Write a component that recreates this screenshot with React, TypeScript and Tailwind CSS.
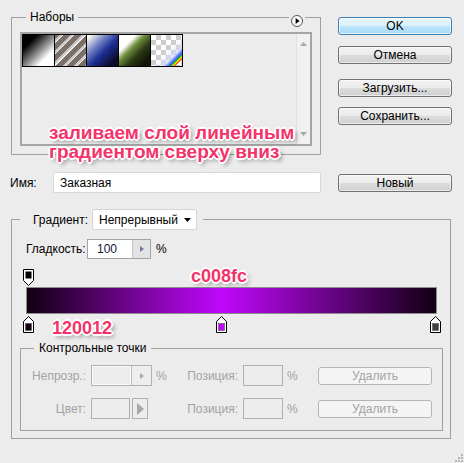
import React from "react";

// presets shown in the "Наборы" list
const presets = [
  "bg-[linear-gradient(135deg,#000_22%,#8a8a8a_52%,#fff_74%)]",
  "bg-[repeating-linear-gradient(135deg,#7b6f67_0px,#7b6f67_3px,#c8c8c8_3px,#c8c8c8_5px,#efefef_5px,#efefef_6px,#7b6f67_6px,#7b6f67_8px)]",
  "bg-[linear-gradient(135deg,#fbf6ee_6%,#7283c4_32%,#1c2f93_55%,#0a0e2c_85%)]",
  "bg-[linear-gradient(135deg,#fff_27%,#6e8f3c_42%,#2c3a14_62%,#11160a_85%)]",
];

const pinkText =
  "absolute whitespace-nowrap font-bold text-[#f4336b] [text-shadow:-1px_-1px_0_#fff,1px_-1px_0_#fff,-1px_1px_0_#fff,1px_1px_0_#fff,0_-2px_0_#fff,0_2px_0_#fff,-2px_0_0_#fff,2px_0_0_#fff,3px_3px_4px_rgba(0,0,0,0.45)]";

function Btn({
  children,
  kind = "normal",
}: {
  children: React.ReactNode;
  kind?: "normal" | "primary" | "disabled";
}) {
  const look =
    kind === "primary"
      ? "border-[#3c7fb1] bg-[linear-gradient(#eaf6fd,#d9f0fc_50%,#bee6fd_50%,#a7d9f5)] shadow-[inset_0_0_0_1px_rgba(255,255,255,0.7)]"
      : kind === "disabled"
        ? "border-[#b5b5b5] bg-[#f4f4f4] text-[#a3a3a3]"
        : "border-[#707070] bg-[linear-gradient(#f2f2f2,#ebebeb_50%,#dddddd_50%,#cfcfcf)] shadow-[inset_0_0_0_1px_rgba(255,255,255,0.6)]";
  return (
    <div
      className={`flex h-[18px] w-[114px] items-center justify-center rounded-[3px] border text-[12px] leading-none ${look}`}
    >
      {children}
    </div>
  );
}

function TopStop() {
  return (
    <svg width="11" height="17" viewBox="0 0 11 17">
      <path d="M0.5 0.5 H10.5 V11.5 L5.5 16.5 L0.5 11.5 Z" fill="#fff" stroke="#000" />
      <rect x="2.5" y="2.5" width="6" height="7" fill="#000" />
    </svg>
  );
}

function BottomStop({ color }: { color: string }) {
  return (
    <svg width="11" height="17" viewBox="0 0 11 17">
      <path d="M5.5 0.5 L10.5 5.5 V16.5 H0.5 V5.5 Z" fill="#fff" stroke="#000" />
      <rect x="2.5" y="7.5" width="6" height="7" fill={color} stroke="#555" strokeWidth="0.6" />
    </svg>
  );
}

function SpinArrow({ color }: { color: string }) {
  return (
    <svg width="4" height="6" viewBox="0 0 4 6">
      <path d="M0 0 L4 3 L0 6 Z" fill={color} />
    </svg>
  );
}

export default function App() {
  return (
    <div className="relative h-[463px] w-[464px] overflow-hidden bg-[#ececec] font-['Liberation_Sans',Arial,sans-serif] text-[12px] leading-[14px] text-black">
      {/* presets + buttons */}
      <div className="flex">
        <div className="relative ml-[11px] mt-[10px]">
          <fieldset className="w-[310px] border border-[#a0a0a0] px-[8px] pb-[8px]">
            <legend className="ml-[6px] px-[4px] leading-[14px]">Наборы</legend>
            <div className="mt-[8px] flex h-[114px] border-2 border-[#a5a5a5]">
              <div className="flex-1">
                <div className="flex h-[33px] w-[161px] border-y border-l border-black">
                  {presets.map((p) => (
                    <div key={p} className={`h-full w-[32px] border-r border-black ${p}`} />
                  ))}
                  <div className="h-full w-[32px] border-r border-black bg-[conic-gradient(#cdcdcd_25%,#fff_0_50%,#cdcdcd_0_75%,#fff_0)] bg-[length:10px_10px]">
                    <div className="h-full w-full bg-[linear-gradient(135deg,transparent_50%,rgba(215,222,255,0.7)_70%,#3a5cff_79%,#00c000_82%,#ffee00_85%,#ff2000_88%,transparent_90%)]" />
                  </div>
                </div>
              </div>
              <div className="flex w-[14px] flex-col items-center justify-between border-l border-[#e0e0e0] bg-[#f1f1f1] py-[8px]">
                <svg width="7" height="4" viewBox="0 0 7 4">
                  <path d="M3.5 0 L7 4 H0 Z" fill="#a8a8a8" />
                </svg>
                <svg width="7" height="4" viewBox="0 0 7 4">
                  <path d="M0 0 H7 L3.5 4 Z" fill="#a8a8a8" />
                </svg>
              </div>
            </div>
          </fieldset>
          <div className="absolute left-[278px] top-[5px] bg-[#ececec] px-[2px]">
            <svg width="12" height="12" viewBox="0 0 12 12" className="block">
              <circle cx="6" cy="6" r="5.5" fill="#fafafa" stroke="#555" />
              <path d="M4.6 3 L8.6 6 L4.6 9 Z" fill="#000" />
            </svg>
          </div>
        </div>

        <div className="ml-[17px] mt-[17px] flex flex-col">
          <Btn kind="primary">OK</Btn>
          <div className="mt-[11px]">
            <Btn>Отмена</Btn>
          </div>
          <div className="mt-[15px]">
            <Btn>Загрузить...</Btn>
          </div>
          <div className="mt-[10px]">
            <Btn>Сохранить...</Btn>
          </div>
        </div>
      </div>

      {/* name row */}
      <div className="mt-[17px] flex h-[21px] items-center">
        <span className="ml-[10px] w-[43px]">Имя:</span>
        <div className="flex h-[21px] w-[268px] items-center rounded-[2px] border border-[#d8d8d8] bg-white pl-[6px]">
          Заказная
        </div>
        <div className="ml-[17px]">
          <Btn>Новый</Btn>
        </div>
      </div>

      {/* gradient editor */}
      <fieldset className="ml-[11px] mt-[16px] w-[440px] border border-[#a0a0a0] pb-[7px] pl-[8px] pr-[7px]">
        <legend className="flex items-center pl-[13px] pr-[6px]">
          <span>Градиент:</span>
          <div className="ml-[4px] flex h-[21px] w-[105px] items-center justify-between rounded-[2px] border border-[#d5d5d5] bg-white pl-[6px] pr-[5px]">
            <span>Непрерывный</span>
            <svg width="7" height="4" viewBox="0 0 7 4">
              <path d="M0 0 H7 L3.5 4 Z" fill="#000" />
            </svg>
          </div>
        </legend>

        <div className="ml-[6px] mt-[9px] flex h-[20px] items-center">
          <span className="w-[61px]">Гладкость:</span>
          <div className="flex h-[20px] w-[64px] border border-[#a3a3a3] bg-white">
            <div className="flex flex-1 items-center pl-[9px] text-[#14143c]">100</div>
            <div className="flex w-[18px] items-center justify-center border-l border-[#c4c4c4] bg-[#e3e3e3]">
              <SpinArrow color="#6d7aa3" />
            </div>
          </div>
          <span className="ml-[5px]">%</span>
        </div>

        <div className="ml-[6px] mt-[10px] w-[411px]">
          <div className="relative h-[18px]">
            <div className="absolute left-[-3px] top-0">
              <TopStop />
            </div>
          </div>
          <div className="h-[27px] border border-[#8d8d8d] bg-[linear-gradient(to_right,#120012,#c008fc_47.5%,#120012)]" />
          <div className="relative h-[19px]">
            <div className="absolute left-[-3px] top-[2px]">
              <BottomStop color="#120012" />
            </div>
            <div className="absolute left-[190px] top-[2px]">
              <BottomStop color="#c008fc" />
            </div>
            <div className="absolute left-[404px] top-[2px]">
              <BottomStop color="#404040" />
            </div>
          </div>
        </div>

        <fieldset className="mt-[8px] w-[423px] border border-[#a0a0a0] pb-[11px]">
          <legend className="ml-[13px] px-[5px] leading-[14px]">Контрольные точки</legend>

          <div className="mt-[10px] flex h-[21px] items-center text-[#a3a3a3]">
            <span className="w-[65px] text-right">Непрозр.:</span>
            <div className="ml-[5px] flex h-[21px] w-[61px] border border-[#b0b0b0]">
              <div className="flex-1 border border-[#fafafa]" />
              <div className="flex w-[20px] items-center justify-center border-l border-[#bcbcbc] bg-[#ededed]">
                <SpinArrow color="#a8a8a8" />
              </div>
            </div>
            <span className="ml-[4px] w-[30px]">%</span>
            <span className="w-[52px] text-right">Позиция:</span>
            <div className="ml-[5px] h-[21px] w-[40px] border border-[#b0b0b0]" />
            <span className="ml-[4px] w-[31px]">%</span>
            <Btn kind="disabled">Удалить</Btn>
          </div>

          <div className="mt-[12px] flex h-[21px] items-center text-[#a3a3a3]">
            <span className="w-[65px] text-right">Цвет:</span>
            <div className="ml-[5px] flex h-[21px] w-[61px]">
              <div className="h-[21px] w-[39px] border border-[#b0b0b0]" />
              <div className="ml-[2px] flex h-[21px] w-[16px] items-center justify-center border border-[#b0b0b0]">
                <svg width="7" height="12" viewBox="0 0 7 12">
                  <path d="M0 0 L7 6 L0 12 Z" fill="#a6a6a6" />
                </svg>
              </div>
            </div>
            <span className="ml-[4px] w-[30px]" />
            <span className="w-[52px] text-right">Позиция:</span>
            <div className="ml-[5px] h-[21px] w-[40px] border border-[#b0b0b0]" />
            <span className="ml-[4px] w-[31px]">%</span>
            <Btn kind="disabled">Удалить</Btn>
          </div>
        </fieldset>
      </fieldset>

      {/* resize grip */}
      <svg width="10" height="10" viewBox="0 0 10 10" className="absolute bottom-[1px] right-[1px]">
        <rect x="8" y="2" width="2" height="2" fill="#b5b5b5" />
        <rect x="8" y="5" width="2" height="2" fill="#b5b5b5" />
        <rect x="5" y="5" width="2" height="2" fill="#b5b5b5" />
        <rect x="8" y="8" width="2" height="2" fill="#b5b5b5" />
        <rect x="5" y="8" width="2" height="2" fill="#b5b5b5" />
        <rect x="2" y="8" width="2" height="2" fill="#b5b5b5" />
      </svg>

      {/* annotations */}
      <div className={`${pinkText} left-[49px] top-[123px] text-[19px] leading-[19px]`}>
        заливаем слой линейным
        <br />
        градиентом сверху вниз
      </div>
      <div className={`${pinkText} left-[191px] top-[267px] text-[18px] leading-[18px]`}>c008fc</div>
      <div className={`${pinkText} left-[52px] top-[319px] text-[18px] leading-[18px]`}>120012</div>
    </div>
  );
}
